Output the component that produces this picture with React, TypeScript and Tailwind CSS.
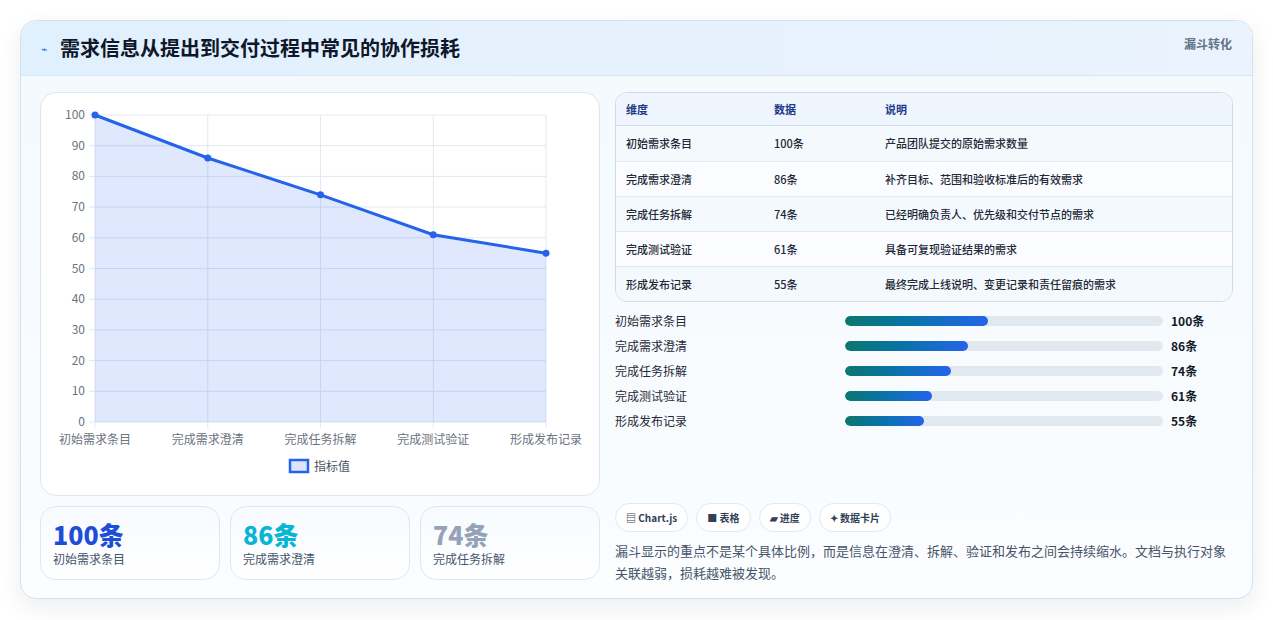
import React from "react";

const rows = [
  { name: "初始需求条目", value: 100, note: "产品团队提交的原始需求数量" },
  { name: "完成需求澄清", value: 86, note: "补齐目标、范围和验收标准后的有效需求" },
  { name: "完成任务拆解", value: 74, note: "已经明确负责人、优先级和交付节点的需求" },
  { name: "完成测试验证", value: 61, note: "具备可复现验证结果的需求" },
  { name: "形成发布记录", value: 55, note: "最终完成上线说明、变更记录和责任留痕的需求" },
];

const font = { fontFamily: '"Noto Sans CJK SC", "Noto Sans", sans-serif' };

function Chart() {
  const x0 = 54, x1 = 505, y0 = 22, y1 = 329;
  const px = (i: number) => x0 + ((x1 - x0) / 4) * i;
  const py = (v: number) => y1 - ((y1 - y0) * v) / 100;
  const pts = rows.map((r, i) => [px(i), py(r.value)]);
  const line = pts.map((p, i) => `${i ? "L" : "M"}${p[0]},${p[1]}`).join(" ");
  return (
    <svg width="558" height="400" className="block">
      {[0, 10, 20, 30, 40, 50, 60, 70, 80, 90, 100].map((v) => (
        <g key={v}>
          <line x1={x0 - 6} x2={x1} y1={py(v)} y2={py(v)} stroke="#e2e8f0" />
          <text x={x0 - 10} y={py(v) + 4} textAnchor="end" fontSize="12" fill="#6b7280">{v}</text>
        </g>
      ))}
      {rows.map((r, i) => (
        <g key={r.name}>
          <line x1={px(i)} x2={px(i)} y1={y0} y2={y1 + 6} stroke="#e2e8f0" />
          <text x={px(i)} y={y1 + 22} textAnchor="middle" fontSize="12" fill="#6b7280">{r.name}</text>
        </g>
      ))}
      <path d={`${line} L${x1},${y1} L${x0},${y1} Z`} fill="#2563eb" fillOpacity="0.15" />
      <path d={line} fill="none" stroke="#2563eb" strokeWidth="3" />
      {pts.map((p, i) => <circle key={i} cx={p[0]} cy={p[1]} r="3.5" fill="#2563eb" />)}
      <rect x="249" y="367" width="18" height="12" fill="#dbe4fb" stroke="#2563eb" strokeWidth="2.5" />
      <text x="273" y="378" fontSize="12" fill="#4b5563">指标值</text>
    </svg>
  );
}

export default function App() {
  return (
    <div className="w-[1273px] h-[620px] bg-white p-5" style={font}>
      <div className="h-[579px] rounded-2xl border border-[#cfe3f3] bg-gradient-to-b from-[#f3f9fe] to-[#fbfdff] shadow-[0_8px_24px_rgba(15,23,42,0.08)] overflow-hidden flex flex-col">
        <div className="h-[55px] shrink-0 bg-gradient-to-r from-[#e1f0fd] to-[#eaf3fe] border-b border-[#d5e6f5] flex items-center justify-between px-5">
          <div className="flex items-center gap-3">
            <span className="text-[11px] text-[#2563eb]">⌁</span>
            <span className="text-[20px] font-bold text-[#0f172a]">需求信息从提出到交付过程中常见的协作损耗</span>
          </div>
          <span className="text-xs font-semibold text-[#64748b] -mt-2">漏斗转化</span>
        </div>
        <div className="flex gap-[15px] px-[19px] pt-[16px]">
          <div className="w-[560px] flex flex-col gap-[10px]">
            <div className="h-[404px] rounded-2xl border border-[#dbe7f3] bg-white">
              <Chart />
            </div>
            <div className="grid grid-cols-3 gap-[10px]">
              {[
                ["100条", "初始需求条目", "text-[#1d4ed8]"],
                ["86条", "完成需求澄清", "text-[#06b6d4]"],
                ["74条", "完成任务拆解", "text-[#94a3b8]"],
              ].map(([v, l, c]) => (
                <div key={l} className="h-[74px] rounded-2xl border border-[#dbe7f3] bg-gradient-to-b from-[#f7fbff] to-white px-3 pt-[10px]">
                  <div className={`text-[25px] leading-[34px] font-extrabold ${c}`}>{v}</div>
                  <div className="text-xs text-[#475569]">{l}</div>
                </div>
              ))}
            </div>
          </div>
          <div className="flex-1 flex flex-col">
            <div className="rounded-xl border border-[#cddced] bg-white overflow-hidden">
              <div className="h-[33px] flex items-center bg-[#eef5fd] border-b border-[#cddced] text-[11px] font-bold text-[#1e3a8a]">
                <div className="w-[158px] pl-2.5">维度</div>
                <div className="w-[111px]">数据</div>
                <div>说明</div>
              </div>
              {rows.map((r, i) => (
                <div key={r.name} className={`h-[35px] flex items-center text-[11px] text-[#1f2937] ${i % 2 === 0 ? "bg-[#f4f9fe]" : "bg-[#fafcff]"} ${i ? "border-t border-[#e2e8f0]" : ""}`}>
                  <div className="w-[158px] pl-2.5 font-medium">{r.name}</div>
                  <div className="w-[111px] font-medium">{r.value}条</div>
                  <div className="font-medium">{r.note}</div>
                </div>
              ))}
            </div>
            <div className="mt-[6px] flex flex-col">
              {rows.map((r) => (
                <div key={r.name} className="h-[25px] flex items-center text-xs">
                  <div className="w-[230px] text-[#1f2937]">{r.name}</div>
                  <div className="w-[318px] h-[10px] rounded-full bg-[#e2e8f0] overflow-hidden">
                    <div className="h-full rounded-full bg-gradient-to-r from-[#0f766e] to-[#2563eb]" style={{ width: `${r.value * 0.45}%` }} />
                  </div>
                  <div className="ml-2 font-bold text-[#111827]">{r.value}条</div>
                </div>
              ))}
            </div>
            <div className="mt-[70px] flex gap-2">
              {["▤ Chart.js", "■ 表格", "▰ 进度", "✦ 数据卡片"].map((t) => (
                <span key={t} className="h-[29px] px-2.5 flex items-center rounded-full border border-[#e2e8f0] bg-white text-[10px] font-semibold text-[#334155]">{t}</span>
              ))}
            </div>
            <p className="mt-[8px] text-[13px] leading-[22px] text-[#475569]">
              漏斗显示的重点不是某个具体比例，而是信息在澄清、拆解、验证和发布之间会持续缩水。文档与执行对象关联越弱，损耗越难被发现。
            </p>
          </div>
        </div>
      </div>
    </div>
  );
}
